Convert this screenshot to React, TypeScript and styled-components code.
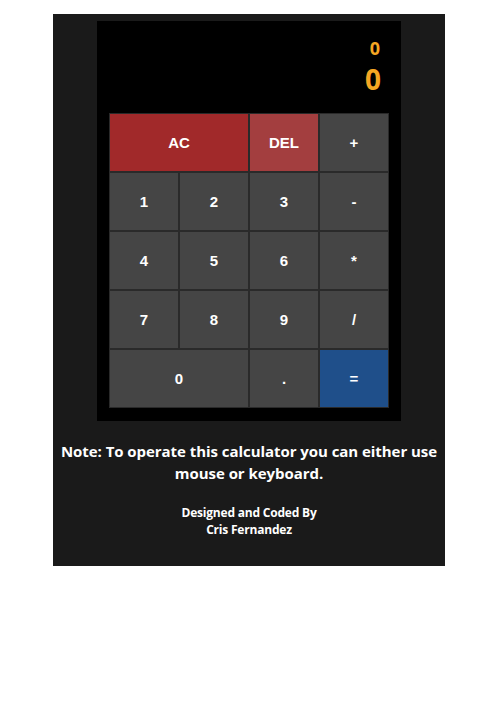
import styled, { createGlobalStyle } from "styled-components";

const GlobalStyle = createGlobalStyle`
  body {
    margin: 8px;
    background: #ffffff;
    font-family: "Liberation Sans", Arial, sans-serif;
  }
`;

const Panel = styled.div`
  width: 392px;
  margin: 6px 0 0 calc(50% - 197px);
  padding: 7px 0 28px;
  background-color: #1a1a1a;
  box-sizing: border-box;
  display: flex;
  flex-direction: column;
  align-items: center;
`;

const Calculator = styled.div`
  width: 304px;
  background-color: #000;
  padding: 0 12px 13px;
  box-sizing: border-box;
`;

const Display = styled.div`
  height: 92px;
  display: flex;
  flex-direction: column;
  align-items: flex-end;
  justify-content: flex-start;
  padding: 16px 8px 0 0;
  box-sizing: border-box;
  color: #f5a623;
  font-family: "Open Sans", sans-serif;
  font-weight: 700;
`;

const Formula = styled.div`
  font-size: 18px;
  line-height: 22px;
  margin-right: 1px;
`;

const Output = styled.div`
  font-size: 28px;
  line-height: 36px;
  margin-top: 2px;
`;

const Keys = styled.div`
  display: grid;
  grid-template-columns: repeat(4, 70px);
  grid-auto-rows: 59px;
`;

type Tone = "clear" | "delete" | "plain" | "equals";

const toneColor: Record<Tone, string> = {
  clear: "#a1292a",
  delete: "#a33e3f",
  plain: "#454545",
  equals: "#1f4f8a",
};

const Key = styled.button<{ $tone?: Tone; $span?: number }>`
  grid-column: span ${(p) => p.$span ?? 1};
  border: 1px solid #2a2a2a;
  margin: 0;
  padding: 0;
  background-color: ${(p) => toneColor[p.$tone ?? "plain"]};
  color: #ffffff;
  font-family: "Liberation Sans", Arial, sans-serif;
  font-weight: 700;
  font-size: 15px;
  cursor: pointer;
`;

const Note = styled.p`
  margin: 19px 0 0;
  width: 384px;
  text-align: center;
  color: #ffffff;
  font-family: "Open Sans", sans-serif;
  font-weight: 700;
  font-size: 15px;
  line-height: 22px;
  letter-spacing: -0.05px;
`;

const Credit = styled.p`
  margin: 20px 0 0;
  text-align: center;
  color: #ffffff;
  font-family: "Open Sans", sans-serif;
  font-weight: 700;
  font-size: 12px;
  line-height: 17px;
  letter-spacing: -0.2px;
`;

const keys: { label: string; tone?: Tone; span?: number }[] = [
  { label: "AC", tone: "clear", span: 2 },
  { label: "DEL", tone: "delete" },
  { label: "+" },
  { label: "1" },
  { label: "2" },
  { label: "3" },
  { label: "-" },
  { label: "4" },
  { label: "5" },
  { label: "6" },
  { label: "*" },
  { label: "7" },
  { label: "8" },
  { label: "9" },
  { label: "/" },
  { label: "0", span: 2 },
  { label: "." },
  { label: "=", tone: "equals" },
];

export default function App() {
  return (
    <>
      <GlobalStyle />
      <Panel>
        <Calculator>
          <Display>
            <Formula>0</Formula>
            <Output>0</Output>
          </Display>
          <Keys>
            {keys.map((k) => (
              <Key key={k.label} $tone={k.tone} $span={k.span}>
                {k.label}
              </Key>
            ))}
          </Keys>
        </Calculator>
        <Note>Note: To operate this calculator you can either use mouse or keyboard.</Note>
        <Credit>
          Designed and Coded By
          <br />
          Cris Fernandez
        </Credit>
      </Panel>
    </>
  );
}
